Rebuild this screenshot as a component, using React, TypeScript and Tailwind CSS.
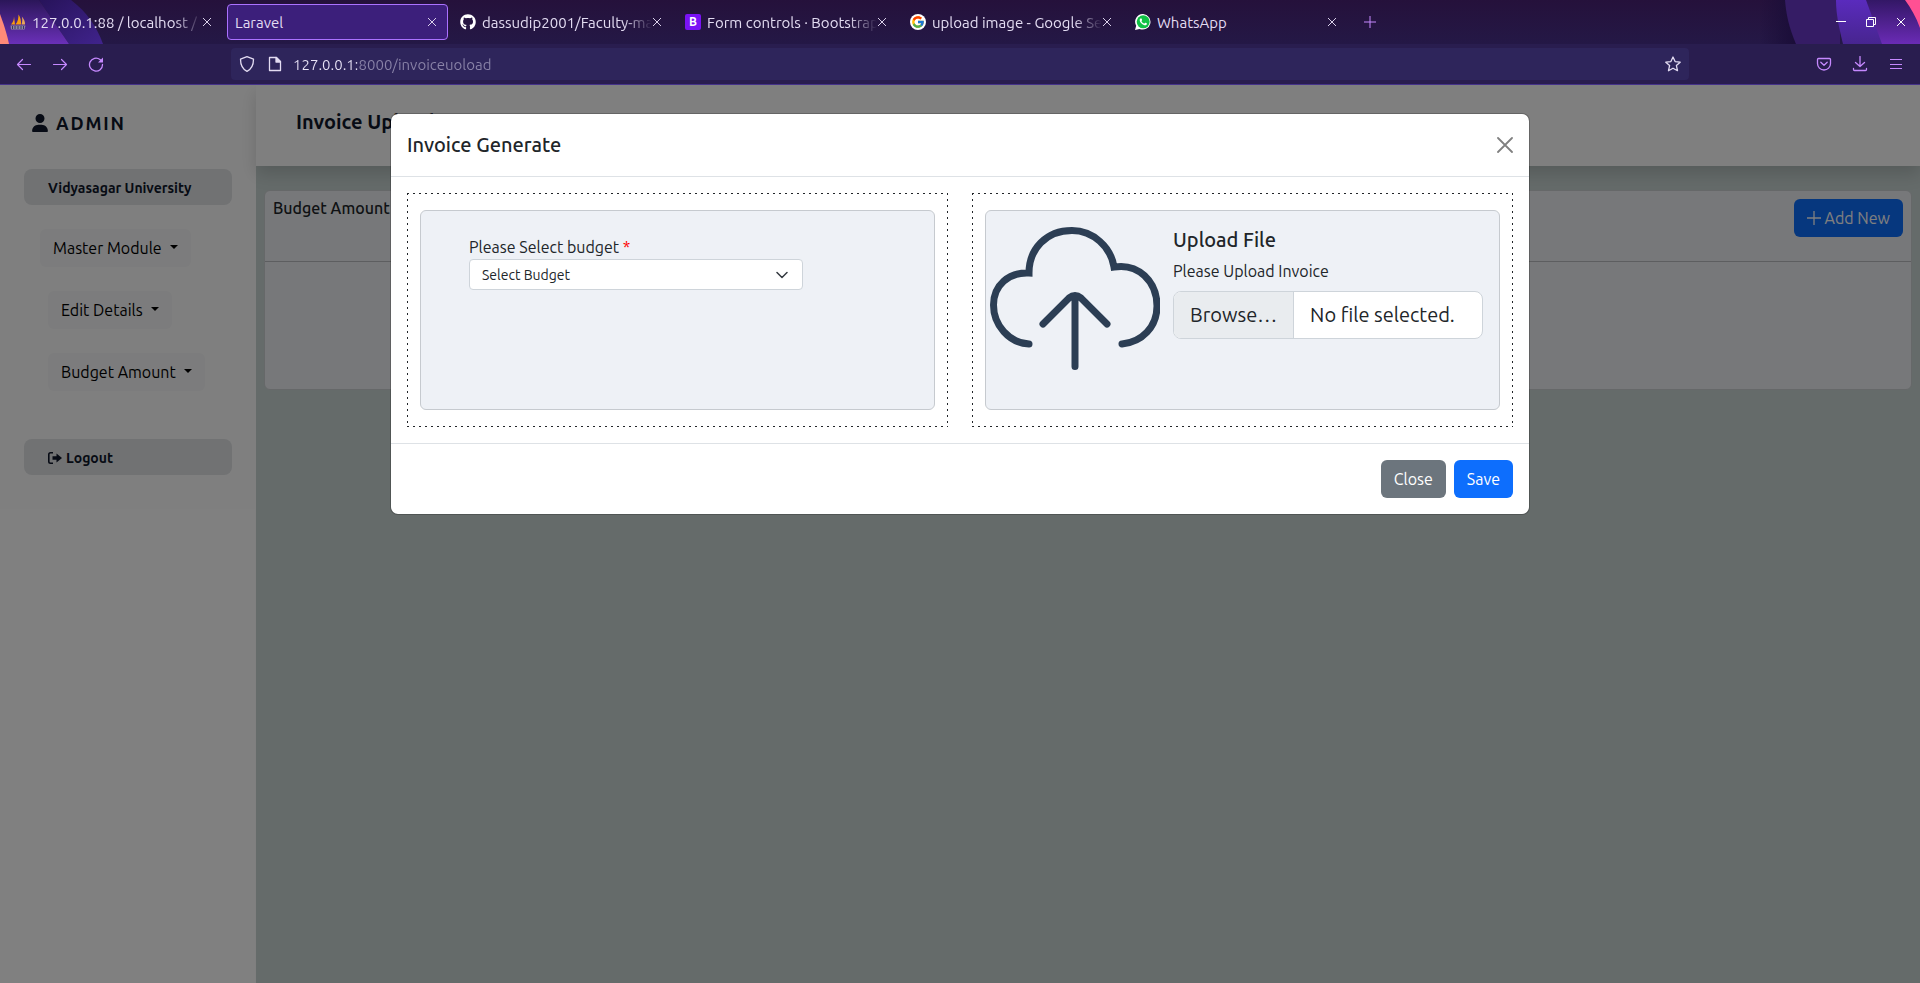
import React, { useId } from "react";
import { FaUser } from "react-icons/fa6";
import { FaGithub } from "react-icons/fa";
import { FcGoogle } from "react-icons/fc";

type Tab = { title: string; icon?: React.ReactNode; active?: boolean };

function PmaIcon() {
  return (
    <svg viewBox="0 0 16 16" className="size-4 shrink-0">
      <path d="M1 10.500C3 8.500 4 5.500 4 2.500L5 10.500Z" fill="#f89c0e" />
      <path d="M5.500 10.500C8 7.500 8.500 4 8.500 0.500C10.500 3.500 11.300 7 11 10.500Z" fill="#f89c0e" />
      <path d="M11.500 10.500C12.500 8 12.500 5 11.800 2.500C14 5 15.300 8 15 10.500Z" fill="#e8a75a" />
      <path d="M0.500 11.500H15.500L14.500 15.500H1Z" fill="#8b86a3" />
      <path d="M2.500 12V15M5 12V15M8 12V15M11 12V15M13.500 12V15" stroke="#3b3560" />
    </svg>
  );
}

function BootstrapIcon() {
  return (
    <span className="flex size-4 shrink-0 items-center justify-center rounded-xs bg-[#7a12f5] text-xs leading-4 font-bold text-white">
      B
    </span>
  );
}

function GoogleIcon() {
  return (
    <span className="flex size-4 shrink-0 items-center justify-center rounded-full bg-white">
      <FcGoogle className="size-3.5" />
    </span>
  );
}

function WhatsAppIcon() {
  return (
    <svg viewBox="0 0 16 16" className="size-4 shrink-0">
      <path d="M8.200 0A7.800 7.800 0 1 1 4.500 14.900L0 16L1.200 11.700A7.800 7.800 0 0 1 8.200 0Z" fill="#fff" />
      <circle cx="8.200" cy="7.800" r="6.500" fill="#10c245" />
      <path
        d="M6.100 4.300C5.500 4.300 4.700 5 4.700 6C4.700 8.500 8 11.300 10.200 11.300C11.200 11.300 12 10.500 12 9.700C12 9.300 10.700 8.700 10.300 8.700C10 8.700 9.500 9.700 9.200 9.600C8.200 9.300 6.900 8 6.500 7.200C6.400 6.900 7.100 6.400 7.100 6C7.100 5.600 6.500 4.300 6.100 4.300Z"
        fill="#fff"
      />
    </svg>
  );
}

const tabs: Tab[] = [
  { title: "127.0.0.1:88 / localhost / l", icon: <PmaIcon /> },
  { title: "Laravel", active: true },
  { title: "dassudip2001/Faculty-ma", icon: <FaGithub className="size-4 shrink-0 text-white" /> },
  { title: "Form controls · Bootstrap", icon: <BootstrapIcon /> },
  { title: "upload image - Google Se", icon: <GoogleIcon /> },
  { title: "WhatsApp", icon: <WhatsAppIcon /> },
];

function Cross({ className }: { className: string }) {
  return (
    <svg viewBox="0 0 10 10" className={className} fill="none" stroke="currentColor">
      <path d="M1 1L9 9M9 1L1 9" />
    </svg>
  );
}

function TabItem({ tab }: { tab: Tab }) {
  return (
    <div
      className={
        tab.active
          ? "flex h-9 w-[221px] items-center gap-1.5 rounded-sm border border-[#ab71ff] bg-[#3c1f7b] pr-2.5 pl-[7px]"
          : "flex h-9 w-[221px] items-center gap-1.5 pr-[11px] pl-2"
      }
    >
      {tab.icon}
      <span
        className={
          tab.title.length > 20
            ? "min-w-0 flex-1 overflow-hidden pt-0.5 whitespace-nowrap [mask-image:linear-gradient(to_left,transparent,black_28px)]"
            : "min-w-0 flex-1 overflow-hidden pt-0.5 whitespace-nowrap"
        }
      >
        {tab.title}
      </span>
      <button aria-label={"Close tab " + tab.title} className="-ml-1.5 shrink-0 text-[#d9d0ea]">
        <Cross className="size-2.5" />
      </button>
    </div>
  );
}

function BrowserChrome() {
  return (
    <header className="border-b border-[#45328a] bg-[#291d4f] text-[15px] leading-5 text-[#e3dcf2]">
      <div className="relative flex h-11 items-center bg-linear-to-b from-[#25113b] to-[#241846] pl-0.5">
        <svg className="absolute top-0 left-0 h-11 w-32" viewBox="0 0 128 44">
          <defs>
            <linearGradient id="la" x1="0" y1="0" x2="0" y2="1">
              <stop offset="0" stopColor="#2b1659" />
              <stop offset="1" stopColor="#6a30b8" />
            </linearGradient>
            <linearGradient id="lb" x1="0" y1="0" x2="1" y2="1">
              <stop offset="0" stopColor="#27135a" />
              <stop offset="1" stopColor="#40238c" />
            </linearGradient>
          </defs>
          <path d="M39 0H71C87 12 97 27 103 44H69Z" fill="url(#lb)" />
          <path d="M0 0H39L69 44H0Z" fill="url(#la)" />
          <path d="M0 14C3 22 7 34 9 44H0Z" fill="#ff8a78" />
        </svg>
        <svg className="absolute top-0 right-0 h-11 w-40" viewBox="0 0 160 44">
          <defs>
            <linearGradient id="ra" x1="0" y1="0" x2="0" y2="1">
              <stop offset="0" stopColor="#331766" />
              <stop offset="1" stopColor="#6a2bb5" />
            </linearGradient>
            <linearGradient id="rb" x1="0" y1="0" x2="0" y2="1">
              <stop offset="0" stopColor="#5a2bbd" />
              <stop offset="1" stopColor="#47258f" />
            </linearGradient>
            <linearGradient id="rs" x1="0" y1="0" x2="1" y2="0">
              <stop offset="0" stopColor="#1a0d38" stopOpacity="0" />
              <stop offset="1" stopColor="#1a0d38" />
            </linearGradient>
          </defs>
          <path d="M0 0H26L36 44H0Z" fill="url(#rs)" />
          <path d="M25 0H80V44H36C29 28 26 14 25 0Z" fill="#351c65" />
          <path d="M76 0H110L124 44H83C79 28 76 14 76 0Z" fill="url(#rb)" />
          <path d="M106 0H160V44H122Z" fill="url(#ra)" />
          <path d="M145 0H160V28C156 17 151 8 145 0Z" fill="#ff5093" />
        </svg>
        <div className="relative flex flex-1 items-center gap-1">
          {tabs.map((tab) => (
            <TabItem key={tab.title} tab={tab} />
          ))}
          <button aria-label="New tab" className="ml-3 text-[#c689ff]">
            <svg viewBox="0 0 12 12" className="size-3" stroke="currentColor">
              <path d="M6 0V12M0 6H12" />
            </svg>
          </button>
        </div>
        <div className="relative flex items-center gap-5 pr-3.5 text-white">
          <button aria-label="Minimize">
            <svg viewBox="0 0 10 10" className="size-2.5" stroke="currentColor">
              <path d="M0 4.500H10" />
            </svg>
          </button>
          <button aria-label="Restore">
            <svg viewBox="0 0 10 10" className="size-2.5" fill="none" stroke="currentColor">
              <path d="M0.500 2.500H7.500V9.500H0.500ZM2.500 2.500V0.500H9.500V7.500H7.500" />
            </svg>
          </button>
          <button aria-label="Close window">
            <Cross className="size-2.5" />
          </button>
        </div>
      </div>
      <div className="flex h-10 items-center px-4 text-[#c689ff]">
        <div className="flex w-[215px] items-center gap-5">
          <button aria-label="Back">
            <svg viewBox="0 0 16 16" className="size-4" fill="none" stroke="currentColor" strokeWidth="1.200" strokeLinecap="round" strokeLinejoin="round">
              <path d="M14.500 8.500H1.500M6.500 3.500L1.500 8.500L6.500 13.500" />
            </svg>
          </button>
          <button aria-label="Forward">
            <svg viewBox="0 0 16 16" className="size-4" fill="none" stroke="currentColor" strokeWidth="1.200" strokeLinecap="round" strokeLinejoin="round">
              <path d="M1.500 8.500H14.500M9.500 3.500L14.500 8.500L9.500 13.500" />
            </svg>
          </button>
          <button aria-label="Reload">
            <svg viewBox="0 0 16 16" className="size-4" fill="none" stroke="currentColor" strokeLinecap="round">
              <path d="M14.500 8.500A6.500 6.500 0 1 1 12 3.500L13 4.500" strokeWidth="1.300" />
              <path d="M15 1.500V6.500H10Z" fill="currentColor" stroke="none" />
            </svg>
          </button>
        </div>
        <div className="flex h-8 flex-1 items-center rounded-sm bg-[#2e255b] px-2 text-[#e3dcf2]">
          <svg viewBox="0 0 16 16" className="size-4 shrink-0" fill="none" stroke="currentColor" strokeWidth="1.300" strokeLinejoin="round">
            <path d="M8 0.700L14.500 3.200C14.500 8.500 13 12.800 8 15.300C3 12.800 1.500 8.500 1.500 3.200Z" />
          </svg>
          <svg viewBox="0 0 16 16" className="ml-3 size-4 shrink-0" fill="none" stroke="currentColor" strokeWidth="1.300" strokeLinejoin="round">
            <path d="M2.500 1.500H9.500L13.500 5.500V14.500H2.500Z" />
            <path d="M9 1.500V6H13.500Z" fill="currentColor" />
          </svg>
          <input
            type="text"
            aria-label="Address"
            defaultValue="127.0.0.1:8000/invoiceuoload"
            className="ml-2.5 min-w-0 flex-1 bg-linear-to-r from-[#e9e3f7] from-[64px] to-[#8a83a8] to-[64px] bg-clip-text pt-0.5 text-transparent outline-none"
          />
          <button aria-label="Bookmark this page">
            <svg viewBox="0 0 16 16" className="size-4" fill="none" stroke="currentColor" strokeWidth="1.300" strokeLinejoin="round">
              <path d="M8 1L10.100 5.600L15.200 6.200L11.400 9.600L12.500 14.700L8 12.200L3.500 14.700L4.600 9.600L0.800 6.200L5.900 5.600Z" />
            </svg>
          </button>
        </div>
        <div className="flex w-[215px] items-center justify-end gap-5">
          <button aria-label="Save to Pocket">
            <svg viewBox="0 0 16 16" className="size-4" fill="none" stroke="currentColor" strokeWidth="1.300" strokeLinecap="round" strokeLinejoin="round">
              <path d="M2.500 2.500H13.500Q14.500 2.500 14.500 3.500V7.500A6.500 6.500 0 0 1 1.500 7.500V3.500Q1.500 2.500 2.500 2.500Z" />
              <path d="M4.800 6.300L8 9.300L11.200 6.300" />
            </svg>
          </button>
          <button aria-label="Downloads">
            <svg viewBox="0 0 16 16" className="size-4" fill="none" stroke="currentColor" strokeWidth="1.300" strokeLinecap="round" strokeLinejoin="round">
              <path d="M8 0.500V10.500M3.500 6.500L8 10.500L12.500 6.500M1.500 12.500V13.500Q1.500 14.500 2.500 14.500H13.500Q14.500 14.500 14.500 13.500V12.500" />
            </svg>
          </button>
          <button aria-label="Open menu">
            <svg viewBox="0 0 16 16" className="size-4" stroke="currentColor">
              <path d="M2 3.500H14M2 8.500H14M2 12.500H14" />
            </svg>
          </button>
        </div>
      </div>
    </header>
  );
}

function DropButton({ children }: { children: string }) {
  return (
    <button className="flex h-[38px] items-center gap-2 rounded-md bg-[#f8f9fa] px-[13px] text-black">
      {children}
      <span className="mb-0.5 border-x-4 border-t-4 border-x-transparent border-t-black" />
    </button>
  );
}

function Sidebar() {
  return (
    <aside className="w-64 shrink-0 bg-white px-6 pt-[26px] text-[#0f172a]">
      <div className="flex h-6 items-center gap-2 px-2 text-lg font-bold tracking-widest">
        <FaUser className="h-[18px] w-4" />
        ADMIN
      </div>
      <nav className="mt-[34px] flex flex-col items-start gap-6">
        <a href="#university" className="flex h-9 w-full items-center rounded-lg bg-[#e2e4e6] px-6 pt-0.5 text-sm font-bold">
          Vidyasagar University
        </a>
        <div className="pl-4">
          <DropButton>Master Module</DropButton>
        </div>
        <div className="pl-6">
          <DropButton>Edit Details</DropButton>
        </div>
        <div className="pl-6">
          <DropButton>Budget Amount</DropButton>
        </div>
        <a href="#logout" className="mt-6 flex h-9 w-full items-center gap-1 rounded-lg bg-[#e2e4e6] px-6 pt-0.5 text-sm font-bold">
          <svg viewBox="0 0 14 14" className="size-3.5" fill="none" stroke="currentColor" strokeWidth="1.600">
            <path d="M5 1.800H2.500Q0.800 1.800 0.800 3.500V10.500Q0.800 12.200 2.500 12.200H5" />
            <path d="M4.500 5.200H8.500V2.500L14 7L8.500 11.500V8.800H4.500Z" fill="currentColor" stroke="none" />
          </svg>
          Logout
        </a>
      </nav>
    </aside>
  );
}

function MainPanel() {
  return (
    <main className="min-w-0 flex-1 bg-[#cad6d4]">
      <div className="h-[81px] bg-white px-10 pt-[23px] shadow-[0_8px_16px_rgba(0,0,0,0.15)]">
        <h1 className="text-xl font-bold text-[#0f172a]">Invoice Upload</h1>
      </div>
      <section className="mx-2 mt-6 min-h-[200px] rounded-md border border-[#ccd0d2] bg-[#eef1f4]">
        <div className="flex h-[71px] items-start justify-between border-b border-[#babdc0] p-2">
          <h2 className="leading-[18px] font-medium text-[#212529]">Budget Amount</h2>
          <button className="flex h-[38px] items-center gap-1 rounded-md bg-[#0d6efd] px-[13px] text-white">
            <svg viewBox="0 0 14 14" className="size-3.5" stroke="currentColor" strokeWidth="1.300">
              <path d="M7 0V14M0 7H14" />
            </svg>
            Add New
          </button>
        </div>
      </section>
    </main>
  );
}

function DottedPanel({ children }: { children: React.ReactNode }) {
  return (
    <div className="bg-[repeating-linear-gradient(to_right,#212529_0_2px,transparent_2px_6px),repeating-linear-gradient(to_right,#212529_0_2px,transparent_2px_6px),repeating-linear-gradient(to_bottom,#212529_0_2px,transparent_2px_6px),repeating-linear-gradient(to_bottom,#212529_0_2px,transparent_2px_6px)] bg-[length:100%_1px,100%_1px,1px_100%,1px_100%] bg-[position:left_top,left_bottom,left_top,right_top] bg-no-repeat px-[13px] py-[17px]">
      <div className="h-[200px] rounded-md border border-[#c6cacf] bg-[#eef1f6]">{children}</div>
    </div>
  );
}

function CloudIcon() {
  return (
    <svg viewBox="0 0 170 144" className="h-36 w-[170px] shrink-0" fill="none" stroke="#2c3e54" strokeWidth="7" strokeLinecap="round">
      <path d="M39 117C19 116 3.500 98 3.500 78C3.500 58 19 45 39 46C39 22 56 3.500 82 3.500C103 3.500 121 20 124 40C148 36 167 54 167 79C167 100 152 115 132 117" />
      <path d="M85 139.500V70M53 97L79 71Q85 66 91 71L117 97" />
    </svg>
  );
}

function InvoiceDialog() {
  const budget = useId();
  const file = useId();
  return (
    <div className="absolute inset-0 flex items-start justify-center bg-black/50 px-4 pt-7">
      <div role="dialog" aria-labelledby="dialog-title" className="w-full max-w-[1140px] rounded-lg border border-black/20 bg-white bg-clip-padding text-[#212529]">
        <div className="flex items-center justify-between border-b border-[#dee2e6] p-4">
          <h2 id="dialog-title" className="text-xl leading-[30px] font-medium">
            Invoice Generate
          </h2>
          <button aria-label="Close dialog" className="text-[#808080]">
            <svg viewBox="0 0 16 16" className="size-4" stroke="currentColor" strokeWidth="1.800" strokeLinecap="round">
              <path d="M1 1L15 15M15 1L1 15" />
            </svg>
          </button>
        </div>
        <div className="grid grid-cols-2 gap-6 p-4">
          <DottedPanel>
            <div className="px-12 pt-6">
              <label htmlFor={budget} className="block leading-6">
                Please Select budget <span className="text-[#ff0000]">*</span>
              </label>
              <div className="grid w-4/5 items-center">
                <select
                  id={budget}
                  className="col-start-1 row-start-1 h-[31px] appearance-none rounded-sm border border-[#ced4da] bg-white px-3 text-sm"
                >
                  <option>Select Budget</option>
                </select>
                <svg viewBox="0 0 12 12" className="pointer-events-none col-start-1 row-start-1 mr-[15px] size-3 justify-self-end" fill="none" stroke="#343a40" strokeWidth="1.500" strokeLinecap="round" strokeLinejoin="round">
                  <path d="M1 3.500L6 8.500L11 3.500" />
                </svg>
              </div>
            </div>
          </DottedPanel>
          <DottedPanel>
            <div className="flex gap-[13px] pt-4 pr-4 pl-1">
              <CloudIcon />
              <div className="flex-1">
                <h3 className="text-xl leading-[26px] font-medium">Upload File</h3>
                <label htmlFor={file} className="mt-1.5 block leading-6">
                  Please Upload Invoice
                </label>
                <label className="mt-2 flex h-12 w-full overflow-hidden rounded-lg border border-[#ced4da] bg-white text-xl">
                  <input id={file} type="file" className="sr-only" />
                  <span className="flex items-center border-r border-[#ced4da] bg-[#e9ecef] px-4">Browse…</span>
                  <span className="flex items-center px-4 whitespace-nowrap">No file selected.</span>
                </label>
              </div>
            </div>
          </DottedPanel>
        </div>
        <div className="flex justify-end gap-2 border-t border-[#dee2e6] p-4">
          <button className="h-[38px] rounded-md bg-[#6c757d] px-[13px] text-white">Close</button>
          <button className="h-[38px] rounded-md bg-[#0d6efd] px-[13px] text-white">Save</button>
        </div>
      </div>
    </div>
  );
}

export default function App() {
  return (
    <div className="flex min-h-screen flex-col font-['Ubuntu','Noto_Sans',sans-serif] text-base">
      <BrowserChrome />
      <div className="relative flex flex-1 overflow-hidden">
        <Sidebar />
        <MainPanel />
        <InvoiceDialog />
      </div>
    </div>
  );
}
